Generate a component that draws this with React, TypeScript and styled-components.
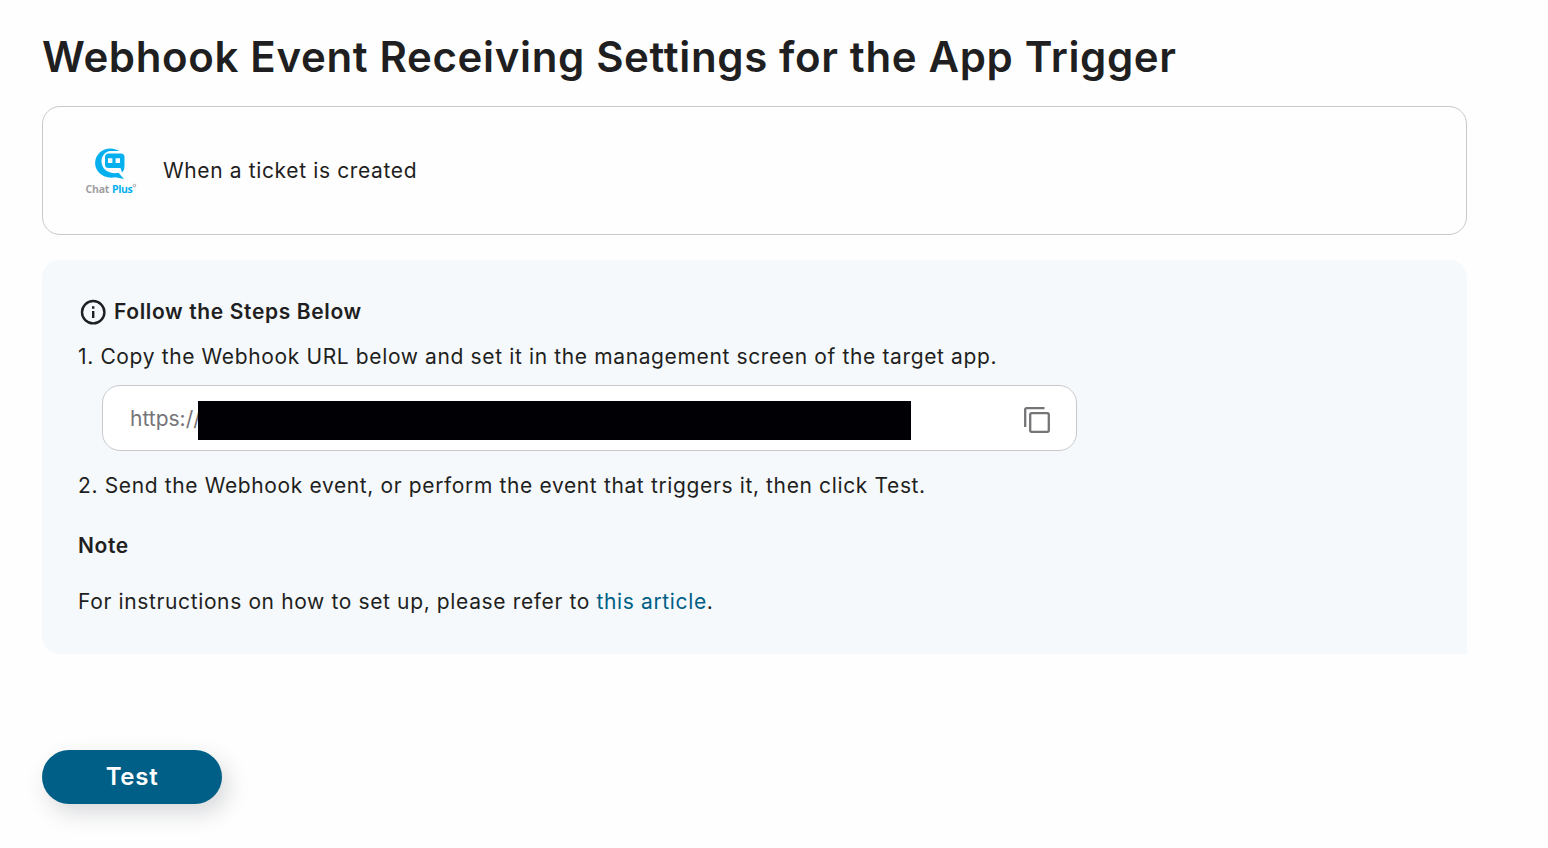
import React from 'react'
import styled, { createGlobalStyle } from 'styled-components'

const GlobalStyle = createGlobalStyle`
  * {
    box-sizing: border-box;
  }

  body {
    margin: 0;
    background: #fefefe;
    color: #1f1f21;
    font-family: Inter, 'Liberation Sans', sans-serif;
    letter-spacing: 0.63px;
  }
`

const Page = styled.main`
  width: 1467px;
  height: 848px;
  padding: 30px 0 0 42px;
`

const Title = styled.h1`
  margin: 0;
  font-size: 42px;
  font-weight: 600;
  line-height: 54px;
  letter-spacing: 0.65px;
  white-space: nowrap;
`

const TriggerCard = styled.section`
  display: flex;
  align-items: center;
  height: 129px;
  margin-top: 22px;
  padding-left: 42px;
  border: 1px solid #c9c8cb;
  border-radius: 18px;
`

const TriggerName = styled.span`
  margin-left: 26px;
  font-size: 21px;
  line-height: 30px;
`

const Steps = styled.section`
  height: 394px;
  margin-top: 25px;
  padding: 36px 36px 0;
  border-radius: 18px 18px 0 18px;
  background: #f5f9fc;
`

const StepsHeading = styled.h2`
  display: flex;
  align-items: center;
  gap: 6px;
  height: 32px;
  margin: 0;
  font-size: 21px;
  font-weight: 600;
  line-height: 30px;
`

const Text = styled.p<{ $top: number; $bold?: boolean }>`
  margin: ${p => p.$top}px 0 0;
  font-size: 21px;
  font-weight: ${p => (p.$bold ? 600 : 400)};
  line-height: 30px;
  white-space: nowrap;
`

const Link = styled.a`
  color: #005f86;
  text-decoration: none;
`

const UrlField = styled.div`
  display: flex;
  align-items: center;
  width: 975px;
  height: 66px;
  margin: 13px 0 0 24px;
  padding: 4px 24px 0 27px;
  border: 1px solid #c9c8cb;
  border-radius: 18px;
  background: #fff;
`

const Url = styled.span`
  width: 68px;
  padding-bottom: 2px;
  color: #757578;
  font-size: 21px;
  line-height: 30px;
  letter-spacing: 0;
  white-space: nowrap;
`

const Redaction = styled.span`
  width: 713px;
  height: 39px;
  background: #010004;
  z-index: 1;
`

const CopyButton = styled.button`
  display: flex;
  margin-left: auto;
  padding: 0;
  border: 0;
  background: none;
  color: #757578;
`

const TestButton = styled.button`
  width: 180px;
  height: 54px;
  margin-top: 96px;
  padding: 0 0 2px;
  border: 0;
  border-radius: 27px;
  background: #005f86;
  box-shadow: 6px 9px 22px rgba(30, 35, 50, 0.17);
  color: #fff;
  font-family: inherit;
  font-size: 24px;
  font-weight: 600;
  letter-spacing: 0.72px;
`

const ChatPlusLogo: React.FC = () => (
  <svg width="52" height="50" viewBox="0 0 52 50">
    <path
      d="M34.500 5C28 1.200 20 1.600 15 6.200C9 11.500 8.800 20 13 25.500C17.500 30.900 24.500 32.600 30.500 31.200L39 33L33.500 26.800C26 28.500 18.500 25 16.800 18C15.500 11.500 19 6 25 5Z"
      fill="#06b0ee"
    />
    <path
      fillRule="evenodd"
      d="M23.500 7.500H36Q39.500 7.500 39.500 11V20.500Q39.500 24.500 37 26.500L35.500 22H23.500Q20 22 20 18.500V11Q20 7.500 23.500 7.500ZM23 12.200V17H27.400V12.200ZM30.600 12.200V17H35V12.200Z"
      fill="#06b0ee"
    />
    <text x="0.500" y="46.500" fontFamily="Open Sans, sans-serif" fontSize="10.500" fontWeight="700" letterSpacing="-0.2" fill="#a09ea2">
      Chat
    </text>
    <text x="27" y="46.500" fontFamily="Open Sans, sans-serif" fontSize="10.500" fontWeight="700" letterSpacing="-0.4" fill="#06b0ee">
      Plus
    </text>
    <circle cx="49.500" cy="39.500" r="1.200" fill="none" stroke="#a09ea2" />
  </svg>
)

const InfoIcon: React.FC = () => (
  <svg width="30" height="30" viewBox="0 0 30 30" fill="none" stroke="currentColor">
    <circle cx="15.200" cy="15.200" r="11.200" strokeWidth="2.400" />
    <path d="M15.200 14v7M15.200 9.200v2.500" strokeWidth="2.400" />
  </svg>
)

const CopyIcon: React.FC = () => (
  <svg width="30" height="30" viewBox="0 0 30 30" fill="none" stroke="currentColor" strokeWidth="2.300">
    <path d="M3.200 22V4.700Q3.200 3.200 4.700 3.200H22.500" />
    <rect x="8.200" y="8.200" width="18.600" height="18.600" rx="1.500" />
  </svg>
)

const App: React.FC = () => {
  return (
    <>
      <GlobalStyle />
      <Page>
        <Title>Webhook Event Receiving Settings for the App Trigger</Title>
        <TriggerCard>
          <ChatPlusLogo />
          <TriggerName>When a ticket is created</TriggerName>
        </TriggerCard>
        <Steps>
          <StepsHeading>
            <InfoIcon />
            <span>Follow the Steps Below</span>
          </StepsHeading>
          <Text $top={14}>1. Copy the Webhook URL below and set it in the management screen of the target app.</Text>
          <UrlField>
            <Url>https://</Url>
            <Redaction />
            <CopyButton aria-label="Copy">
              <CopyIcon />
            </CopyButton>
          </UrlField>
          <Text $top={20}>2. Send the Webhook event, or perform the event that triggers it, then click Test.</Text>
          <Text $top={30} $bold>Note</Text>
          <Text $top={26}>
            For instructions on how to set up, please refer to <Link href="#">this article</Link>.
          </Text>
        </Steps>
        <TestButton>Test</TestButton>
      </Page>
    </>
  )
}

export default App
